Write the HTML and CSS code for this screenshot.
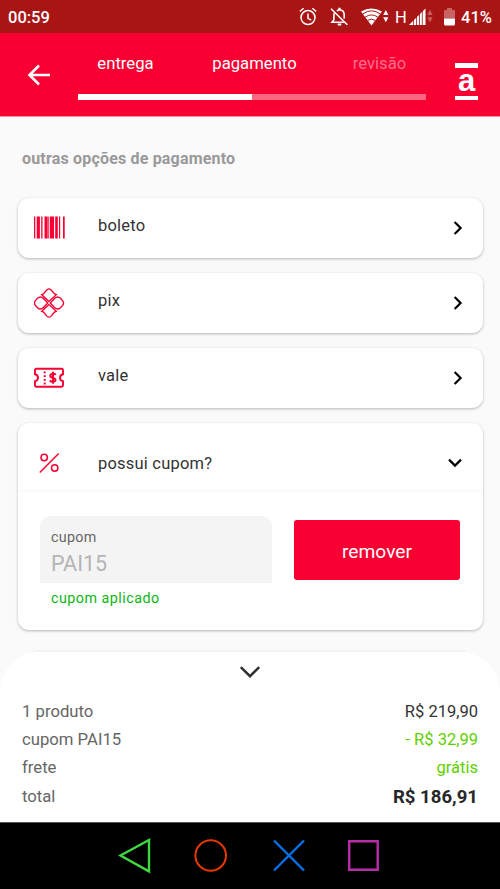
FILE: index.html
```html
<!DOCTYPE html>
<html lang="pt-BR">
<head>
<meta charset="utf-8">
<title>Pagamento</title>
<link rel="stylesheet" href="styles.css">
</head>
<body>
<div class="status">
  <span class="clock">00:59</span>
  <div class="status-icons">
    <svg class="alarm" width="18" height="20" viewBox="0 0 18 20" fill="none" stroke="#fff" stroke-width="1.5"><circle cx="9" cy="10.6" r="7"/><path d="M9 6.5v4.8l3.2 1.9M.8 4.5l3.8-3.2M17.2 4.5l-3.8-3.2"/></svg>
    <svg class="bell" width="18" height="20" viewBox="0 0 18 20" fill="none" stroke="#fff" stroke-width="1.6"><path d="M1 1.8l16.3 16M4.2 6.2C3.7 8 4 11 3.8 13L2 15.2h12M6.8 3.8c1-.6 1.300-.8 2.700-.8 3 0 4.700 2.100 4.700 5v3.600"/><path d="M9.500 3V.8M7.700 17.500h3.600" stroke-width="2.200"/></svg>
    <svg class="wifi" width="28" height="20" viewBox="0 0 28 20" fill="#fff"><path d="M0 4.600Q10.500-1.800 21 4.600L10.500 18.500z"/><path d="M1.800 6.900Q10.500.8 19.200 6.900M4.200 10.100q6.300-4.300 12.600 0M6.700 13.400q3.800-2.500 7.600 0" fill="none" stroke="#a91515" stroke-width="1"/><path d="M22.200 8l2.600-5 2.600 5zM22.200 10.200l2.600 5 2.600-5z"/></svg>
    <span class="net">H</span>
    <svg class="signal" width="25" height="20" viewBox="0 0 25 20"><path d="M0 18L16.500 1.500V18z" fill="#fff"/><path d="M4.500 13v5M7.500 10v8M10.500 7v11M13.300 4v14" stroke="#a91515" stroke-width=".8"/><path d="M18.400 8L21 2.800 23.600 8zM18.400 10.200L21 15.400l2.600-5.200z" fill="#c96060"/></svg>
    <svg class="battery" width="11" height="20" viewBox="0 0 11 20"><path d="M3 1h5v2h2q1 0 1 1v7.500H0V4q0-1 1-1h2z" fill="#c96464"/><path d="M0 11.500h11V17q0 1.500-1.500 1.500h-8Q0 18.500 0 17z" fill="#fff"/></svg>
    <span class="percent">41%</span>
  </div>
</div>
<header class="header">
  <svg class="back" width="24" height="24" viewBox="0 0 24 24" fill="none" stroke="#fff" stroke-width="2.600"><path d="M23 12H2.500M12 2.500L2.500 12l9.500 9.500"/></svg>
  <div class="steps">
    <div class="labels"><span class="step">entrega</span><span class="step">pagamento</span><span class="step next">revisão</span></div>
    <div class="progress"><div class="done"></div></div>
  </div>
  <div class="logo"><span>a</span></div>
</header>
<main class="content">
  <h1 class="title">outras opções de pagamento</h1>
  <div class="card row">
    <svg width="32" height="24" viewBox="0 0 32 24" fill="#f80032"><path d="M0 .5h1.300v22H0zM2.700 .5h3.200v22H2.700zM7.200 .5h1.300v22H7.200zM10.500 .5h3.200v22h-3.200zM14.300 .5h.9v22h-.9zM16 .5h4v22h-4zM21.200 .5h2.600v22h-2.600zM25 .5h1.200v22H25zM29 .5h1.700v22H29z"/></svg>
    <span class="name">boleto</span>
    <svg class="chev" width="10" height="16" viewBox="0 0 10 16"><path d="M1.600 2l6 6-6 6"/></svg>
  </div>
  <div class="card row">
    <svg width="32" height="32" viewBox="0 0 32 32" fill="none" stroke="#f80032" stroke-width="1.400"><g transform="translate(15 16)"><path d="M0-1.600L-7.200-8.300Q-5.200-8.700-2.800-12.300Q0-16 2.800-12.300Q5.200-8.700 7.200-8.300zM0 1.600L-7.200 8.300Q-5.200 8.700-2.800 12.300Q0 16 2.800 12.300Q5.200 8.700 7.200 8.300zM-1.300 0L-5.500-4.500Q-8.500-7.500-11.500-4.700L-13.600-2.400Q-15.500 0-13.600 2.400L-11.500 4.700Q-8.500 7.500-5.500 4.500zM1.300 0L5.500-4.500Q8.500-7.500 11.500-4.700L13.600-2.400Q15.500 0 13.600 2.400L11.500 4.700Q8.500 7.500 5.500 4.500z"/></g></svg>
    <span class="name">pix</span>
    <svg class="chev" width="10" height="16" viewBox="0 0 10 16"><path d="M1.600 2l6 6-6 6"/></svg>
  </div>
  <div class="card row">
    <svg width="32" height="22" viewBox="0 0 32 22" fill="none" stroke="#f80032" stroke-width="1.900"><path d="M2.500 1.800h25q1.500 0 1.500 1.500v4q-3 .7-3 3.500t3 3.500v4q0 1.500-1.500 1.500h-25Q1 19.800 1 18.300v-4q3-.7 3-3.500T1 7.300v-4q0-1.500 1.500-1.500z"/><path d="M10.700 4.500v13" stroke-width="2" stroke-dasharray="1.800 1.900"/><path d="M21.800 7.700q-1-1-2.800-1c-3.200 0-3.700 3.200-.6 4 4 .8 4 4 .6 4q-2.200 0-3.200-1.200M19 4.700v12" stroke-width="2"/></svg>
    <span class="name">vale</span>
    <svg class="chev" width="10" height="16" viewBox="0 0 10 16"><path d="M1.600 2l6 6-6 6"/></svg>
  </div>
  <section class="card coupon">
    <div class="row coupon-head">
      <svg width="32" height="24" viewBox="0 0 32 24" fill="none" stroke="#f80032" stroke-width="1.500"><path d="M5.800 21.500L24.700 2.500"/><circle cx="10.200" cy="6.500" r="3.200"/><circle cx="20.700" cy="17" r="3.200"/></svg>
      <span class="name">possui cupom?</span>
      <svg class="chev" width="16" height="10" viewBox="0 0 16 10"><path d="M2 1.600l6 6 6-6"/></svg>
    </div>
    <div class="coupon-body">
      <div>
        <div class="field"><div class="field-label">cupom</div><div class="field-value">PAI15</div></div>
        <div class="applied">cupom aplicado</div>
      </div>
      <button class="remove">remover</button>
    </div>
  </section>
</main>
<section class="summary">
  <svg class="collapse" width="22" height="14" viewBox="0 0 22 14" fill="none" stroke="#303030" stroke-width="2.500"><path d="M1.800 2.200l9.200 9 9.200-9"/></svg>
  <div class="line"><span>1 produto</span><span class="price">R$ 219,90</span></div>
  <div class="line"><span>cupom PAI15</span><span class="green">- R$ 32,99</span></div>
  <div class="line"><span>frete</span><span class="green">grátis</span></div>
  <div class="line total"><span>total</span><span class="sum">R$ 186,91</span></div>
</section>
<nav class="nav">
  <svg width="34" height="36" viewBox="0 0 34 36"><path d="M2.500 17.500L31 2v31.400z" stroke="#40d840"/></svg>
  <svg width="34" height="36" viewBox="0 0 34 36"><circle cx="16.700" cy="17.500" r="15.300" stroke="#e83800" stroke-width="2"/></svg>
  <svg class="cross" width="34" height="36" viewBox="0 0 34 36"><path d="M2 2.500l30 30M32 2.500L2 32.500" stroke="#0870e8"/></svg>
  <svg width="34" height="36" viewBox="0 0 34 36"><path d="M3.200 3.200h28.500v28.500H3.200z" stroke="#b82ca8"/></svg>
</nav>
</body>
</html>
```
FILE: styles.css
```css
* { box-sizing: border-box; }
body { margin: 0; width: 500px; height: 889px; overflow: hidden; display: flex; flex-direction: column; background: #fafafa; font-family: Roboto, "Liberation Sans", sans-serif; color: #333; }
svg { display: block; flex: none; }
.status { height: 33px; background: #a91515; color: #fff; display: flex; align-items: center; justify-content: space-between; padding: 1px 8px 0 8px; font-size: 16.5px; font-weight: 500; }
.status-icons { display: flex; align-items: center; }
.bell { margin-left: 13px; }
.wifi { margin-left: 13px; }
.net { font-weight: 400; width: 13px; margin-left: 6px; }
.signal { margin-left: 1px; }
.battery { margin: 0 6px 0 10px; }
.header { height: 84px; background: #f80032; border-bottom: 1px solid #fb8ba3; color: #fff; display: flex; align-items: flex-start; padding-left: 27px; }
.back { margin-top: 30px; }
.steps { width: 348px; margin: 20px 0 0 27px; }
.labels { display: flex; height: 41px; line-height: 22px; font-size: 16.7px; }
.step { text-align: center; }
.labels .step:first-child { width: 95px; }
.labels .step:nth-child(2) { width: 163px; }
.labels .next { width: 87px; color: #fc6f8c; }
.progress { height: 6px; background: #fc6680; }
.done { width: 50%; height: 100%; background: #fff; }
.logo { margin: 30px 0 0 29px; width: 23px; height: 37px; border-top: 5px solid #fff; border-bottom: 4px solid #fff; font: bold 31px/26px "Liberation Sans", sans-serif; display: flex; justify-content: center; }
.content { height: 535px; padding: 31px 17.5px 0; display: flex; flex-direction: column; gap: 15.5px; }
.title { margin: 0 0 12.9px 4.5px; font-size: 16px; line-height: 22px; font-weight: 700; letter-spacing: .18px; color: #999; }
.card { background: #fff; border-radius: 11px; box-shadow: 0 1px 3px rgba(0,0,0,.28); flex: none; }
.row { height: 59.5px; display: flex; align-items: center; padding: 0 20px 0 16.5px; }
.name { margin-left: 32px; flex: 1; font-size: 16.5px; padding-bottom: 5px; letter-spacing: .2px; }
.chev path { fill: none; stroke: #000; stroke-width: 2.200; }
.coupon { height: 206.500px; }
.coupon-head { height: 69px; border-bottom: 2px solid #fafafa; padding-top: 12px; }
.coupon-head .name { padding: 2px 0 0; }
.coupon-body { display: flex; align-items: flex-start; justify-content: space-between; padding: 23.500px 22.500px 0 22.500px; }
.field { width: 232px; height: 67px; background: #f4f4f4; border-radius: 11px 11px 0 0; padding: 11px 11px 0; }
.field-label { font-size: 14.300px; line-height: 20px; letter-spacing: .3px; color: #666; }
.field-value { font-size: 21.500px; line-height: 34px; color: #b4b4b4; }
.applied { font-size: 14.300px; line-height: 20px; letter-spacing: .48px; color: #0db514; margin: 5.500px 0 0 11px; }
.remove { width: 166px; height: 60px; margin-top: 4.500px; border: 0; border-radius: 3px; background: #f80032; color: #fff; font: 19.200px Roboto, sans-serif; padding: 2px 0 0; }
.summary { height: 170px; background: #fff; border-radius: 40px 40px 0 0; padding: 13px 22px 0; display: flex; flex-direction: column; position: relative; }
.summary::before { content: ""; position: absolute; left: 34px; right: 34px; top: -2px; height: 2px; background: #f3f3f3; }
.collapse { margin: 0 0 19px 217px; }
.line { display: flex; justify-content: space-between; font-size: 16.700px; line-height: 28px; height: 28px; color: #666; }
.price { color: #333; }
.price, .green { font-size: 16.500px; }
.green { color: #61cf00; }
.total { line-height: 30px; height: 30px; }
.sum { color: #282828; font-size: 18.600px; font-weight: 700; }
.nav { height: 67px; background: #000; border-top: 1px solid #555; display: flex; gap: 42px; padding: 15px 0 0 118px; }
.nav svg { fill: none; stroke-width: 2.400; }
.nav .cross { margin: 0 -2px 0 2px; }
```
